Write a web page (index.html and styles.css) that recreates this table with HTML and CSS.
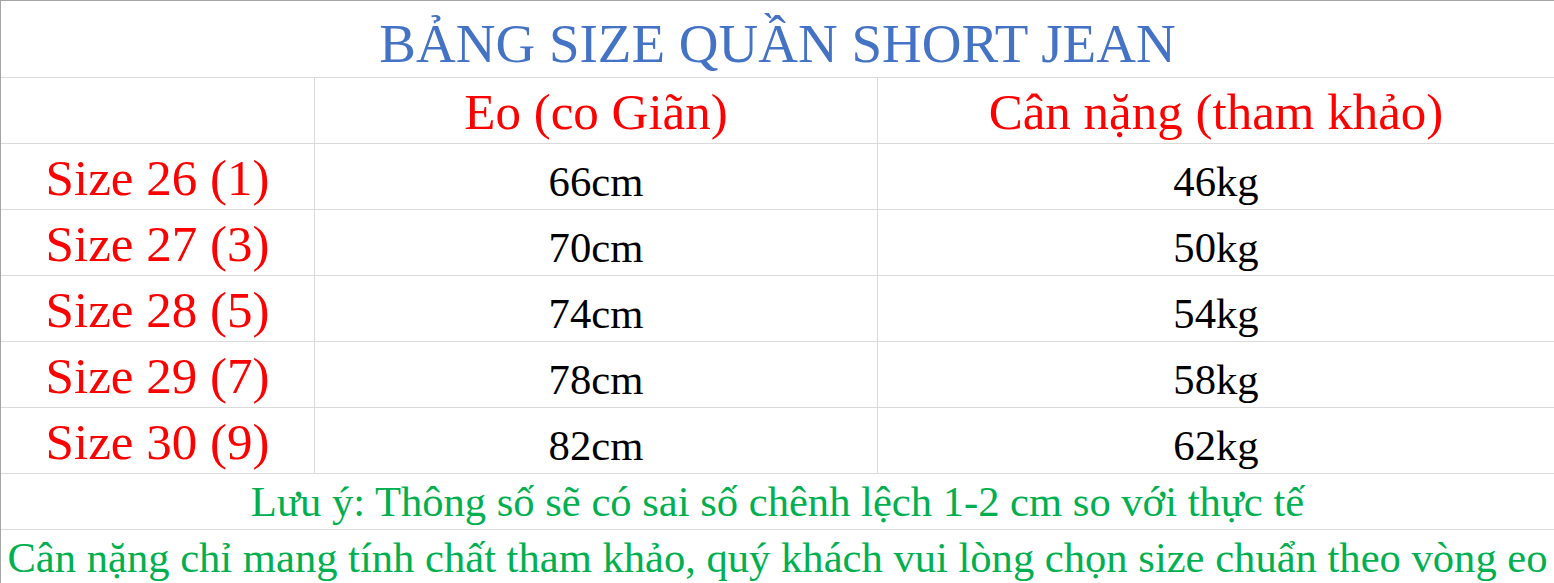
FILE: index.html
```html
<!DOCTYPE html>
<html lang="vi">
<head>
<meta charset="utf-8">
<title>Bảng size quần short jean</title>
<link rel="stylesheet" href="styles.css">
</head>
<body>
<div class="sheet">
  <div class="cell span title">BẢNG SIZE QUẦN SHORT JEAN</div>

  <div class="cell c1 row"></div>
  <div class="cell c2 row head">Eo (co Giãn)</div>
  <div class="cell c3 row head">Cân nặng (tham khảo)</div>

  <div class="cell c1 row size">Size 26 (1)</div>
  <div class="cell c2 row val">66cm</div>
  <div class="cell c3 row val">46kg</div>

  <div class="cell c1 row size">Size 27 (3)</div>
  <div class="cell c2 row val">70cm</div>
  <div class="cell c3 row val">50kg</div>

  <div class="cell c1 row size">Size 28 (5)</div>
  <div class="cell c2 row val">74cm</div>
  <div class="cell c3 row val">54kg</div>

  <div class="cell c1 row size">Size 29 (7)</div>
  <div class="cell c2 row val">78cm</div>
  <div class="cell c3 row val">58kg</div>

  <div class="cell c1 row size">Size 30 (9)</div>
  <div class="cell c2 row val">82cm</div>
  <div class="cell c3 row val">62kg</div>

  <div class="cell span note">Lưu ý: Thông số sẽ có sai số chênh lệch 1-2 cm so với thực tế</div>
  <div class="cell span note">Cân nặng chỉ mang tính chất tham khảo, quý khách vui lòng chọn size chuẩn theo vòng eo</div>
</div>
</body>
</html>
```

FILE: styles.css
```css
html, body {
  margin: 0;
  padding: 0;
  background: #ffffff;
  overflow: hidden;
}

body {
  width: 1554px;
  height: 583px;
  font-family: "Liberation Serif", "Times New Roman", serif;
  color: #000000;
}

.sheet {
  display: grid;
  grid-template-columns: 314px 563px 676px;
  grid-template-rows: 77px repeat(6, 66px) 56px 56px;
  border-top: 1px solid #a5a5a5;
  border-left: 1px solid #a5a5a5;
}

.cell {
  display: flex;
  align-items: flex-end;
  justify-content: center;
  box-sizing: border-box;
  border-bottom: 1px solid #dadada;
  padding-bottom: 2px;
  line-height: normal;
  white-space: nowrap;
  font-size: 51px;
}

.span {
  grid-column: 1 / 4;
}

.c1,
.c2 {
  border-right: 1px solid #dadada;
}

.title {
  font-size: 55px;
  color: #4472c4;
}

.head,
.size {
  color: #ff0000;
}

.val {
  font-size: 42.67px;
  padding-bottom: 3px;
}

.note {
  font-size: 42.6px;
  color: #00b050;
  padding-bottom: 3px;
}
```
